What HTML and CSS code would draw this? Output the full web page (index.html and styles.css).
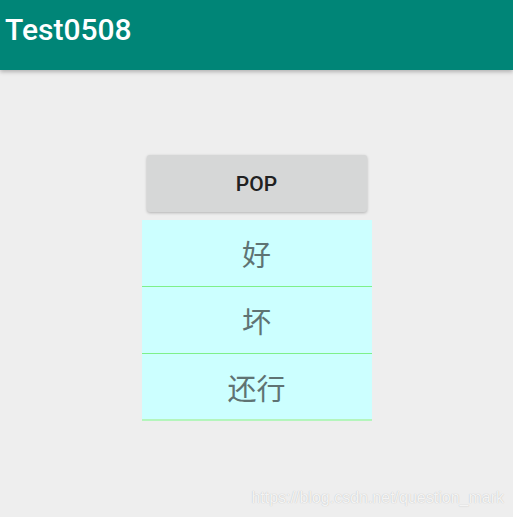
FILE: index.html
```html
<!DOCTYPE html>
<html>
<head>
<meta charset="utf-8">
<link rel="stylesheet" href="styles.css">
</head>
<body>
<header class="appbar"><span class="title">Test0508</span></header>
<main class="content">
  <button class="pop-btn">POP</button>
  <ul class="menu">
    <li class="item">好</li>
    <li class="item">坏</li>
    <li class="item last">还行</li>
  </ul>
</main>
<div class="watermark">https://blog.csdn.net/question_mark</div>
</body>
</html>
```
FILE: styles.css
```css
html, body {
  margin: 0;
  padding: 0;
  background: #eeeeee;
  height: 100%;
  overflow: hidden;
}
body {
  position: relative;
  font-family: Roboto, "Noto Sans CJK SC", sans-serif;
}
.appbar {
  height: 70px;
  background: #008577;
  display: flex;
  align-items: center;
  padding-left: 5px;
  box-shadow: 0 2px 4px rgba(0,0,0,0.25);
  position: relative;
  z-index: 1;
}
.title {
  color: #ffffff;
  font-size: 30px;
  font-weight: 500;
  margin-top: -12px;
}
.content {
  display: flex;
  flex-direction: column;
  align-items: center;
  padding-top: 85px;
}
.pop-btn {
  width: 220px;
  height: 57px;
  border: none;
  border-radius: 3px;
  background: #d6d7d7;
  box-shadow: 0 1px 3px rgba(0,0,0,0.25);
  font-family: Roboto, sans-serif;
  font-size: 21px;
  font-weight: 500;
  color: #212121;
  padding: 0;
}
.menu {
  list-style: none;
  margin: 8px 0 0 0;
  padding: 0;
  width: 230px;
  background: #ccffff;
}
.item {
  height: 66px;
  border-bottom: 1px solid #7ef08a;
  display: flex;
  align-items: center;
  justify-content: center;
  font-family: "Noto Sans CJK SC", sans-serif;
  font-size: 29px;
  color: #5f7373;
}
.item.last {
  border-bottom: 2px solid #b4f5bc;
  height: 65px;
}
.watermark {
  position: absolute;
  right: 9px;
  bottom: 10px;
  font-family: "Liberation Sans", Arial, sans-serif;
  font-size: 16px;
  color: rgba(255,255,255,0.85);
  text-shadow: 0 0 1px rgba(0,0,0,0.25);
}
```
